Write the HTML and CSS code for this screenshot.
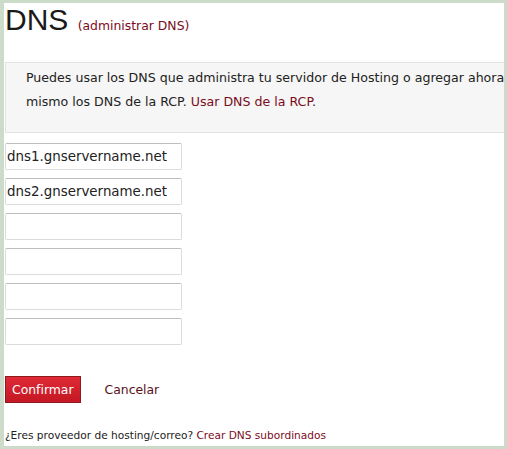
FILE: index.html
```html
<!doctype html>
<html lang="es">
<head>
    <meta charset="UTF-8">
    <title>DNS</title>
    <link rel="stylesheet" href="styles.css">
</head>
<body>
<div class="frame">
    <h1 class="title">DNS <small><a href="#">(administrar DNS)</a></small></h1>
    <div class="notice">
        <p>Puedes usar los DNS que administra tu servidor de Hosting o agregar ahora mismo los DNS de la RCP. <a href="#">Usar DNS de la RCP</a>.</p>
    </div>
    <ul class="dns-list">
        <li><input type="text" value="dns1.gnservername.net"></li>
        <li><input type="text" value="dns2.gnservername.net"></li>
        <li><input type="text" value=""></li>
        <li><input type="text" value=""></li>
        <li><input type="text" value=""></li>
        <li><input type="text" value=""></li>
    </ul>
    <div class="actions">
        <button class="btn-confirm">Confirmar</button>
        <a href="#" class="cancel">Cancelar</a>
    </div>
    <p class="footer">¿Eres proveedor de hosting/correo? <a href="#">Crear DNS subordinados</a></p>
</div>
</body>
</html>
```

FILE: styles.css
```css
*{
    padding: 0;
    margin: 0;
    box-sizing: border-box;
}
body{
    background-color: #ffffff;
    font-family: "DejaVu Sans", Verdana, sans-serif;
    color: #222222;
}
a{
    color: #7a0c1c;
    text-decoration: none;
}
.frame{
    width: 507px;
    height: 449px;
    border: 3px solid #cddcca;
    border-left-width: 4px;
    background-color: #ffffff;
    overflow: hidden;
    display: flex;
    flex-direction: column;
}
.title{
    font-family: "Liberation Sans", Arial, sans-serif;
    font-weight: normal;
    font-size: 30px;
    line-height: 34px;
    height: 34px;
    padding-left: 1px;
    color: #1a1a1a;
}
.title small{
    font-family: "DejaVu Sans", Verdana, sans-serif;
    font-size: 12.4px;
    line-height: 12px;
    margin-left: 1px;
}
.notice{
    margin-top: 25px;
    margin-left: 1px;
    width: 520px;
    background-color: #f6f6f6;
    border: 1px solid #e3e3e3;
    padding: 3px 0 18px 20px;
}
.notice p{
    width: 484px;
    font-size: 12.6px;
    line-height: 24px;
}
.dns-list{
    list-style-type: none;
    margin-top: 10px;
    padding-left: 1px;
    display: flex;
    flex-direction: column;
    gap: 8px;
}
.dns-list input{
    width: 177px;
    height: 27px;
    border: 1px solid #dcdcdc;
    border-top-color: #bdbdbd;
    border-radius: 2px;
    padding: 0 1px;
    font-family: "DejaVu Sans", Verdana, sans-serif;
    font-size: 13.4px;
    color: #222222;
}
.actions{
    margin-top: 31px;
    padding-left: 1px;
    display: flex;
    align-items: center;
    gap: 24px;
}
.btn-confirm{
    height: 27px;
    padding: 0 6px;
    background: linear-gradient(#df2a37, #c41822);
    border: 1px solid #8f1a1e;
    color: #ffffff;
    font-family: "DejaVu Sans", Verdana, sans-serif;
    font-size: 12.4px;
}
.cancel{
    font-size: 12.4px;
    color: #5a0f1c;
}
.footer{
    margin-top: 26px;
    padding-left: 1px;
    font-size: 10.6px;
    color: #222222;
}
```
